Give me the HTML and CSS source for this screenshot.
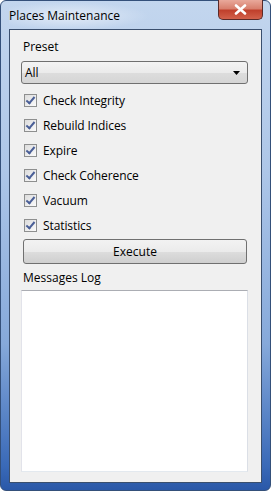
FILE: index.html
```html
<!DOCTYPE html>
<html lang="en">
<head>
  <meta charset="UTF-8">
  <title>Places Maintenance</title>
  <link rel="stylesheet" href="styles.css">
</head>
<body>
  <div class="window">
    <!-- title bar -->
    <div class="titlebar">
      <span class="title">Places Maintenance</span>
      <button class="close-button">
        <svg width="13" height="11" viewBox="0 0 13 11">
          <path d="M2 1.5 L11 9.5 M11 1.5 L2 9.5" stroke="#fff" stroke-width="2.6" stroke-linecap="round"/>
        </svg>
      </button>
    </div>

    <div class="client">
      <div class="label">Preset</div>
      <div class="select">
        <span>All</span>
        <svg class="arrow" width="7" height="4" viewBox="0 0 7 4"><path d="M0 0 H7 L3.5 4 Z" fill="#000"/></svg>
      </div>

      <div class="checks">
        <label class="check"><span class="box"></span>Check Integrity</label>
        <label class="check"><span class="box"></span>Rebuild Indices</label>
        <label class="check"><span class="box"></span>Expire</label>
        <label class="check"><span class="box"></span>Check Coherence</label>
        <label class="check"><span class="box"></span>Vacuum</label>
        <label class="check"><span class="box"></span>Statistics</label>
      </div>

      <button class="execute">Execute</button>

      <div class="label log-label">Messages Log</div>
      <div class="log"></div>
    </div>
  </div>
</body>
</html>
```

FILE: styles.css
```css
body {
  margin: 0;
  font-family: "Open Sans", "Noto Sans", sans-serif;
  font-size: 12px;
  color: #000;
  background: #fff;
}

/* outer aero frame */
.window {
  width: 271px;
  height: 491px;
  box-sizing: border-box;
  padding: 0 8px 7px 8px;
  border-radius: 6px;
  border: 1px solid #34507a;
  background: linear-gradient(to bottom, #c3d6ee 0%, #adc6e8 35%, #86a9da 70%, #3a6ab8 95%, #2a58a8 100%);
  display: flex;
  flex-direction: column;
}

.titlebar {
  height: 28px;
  display: flex;
  justify-content: space-between;
  align-items: flex-start;
  background: radial-gradient(ellipse 80px 14px at 60px 15px, rgba(255,255,255,0.55), rgba(255,255,255,0));
}

.title {
  margin-top: 6px;
  font-size: 12px;
  color: #000;
}

.close-button {
  width: 45px;
  height: 20px;
  margin-top: -1px;
  margin-right: -1px;
  border: 1px solid #5a2a28;
  border-top: none;
  border-radius: 0 0 5px 5px;
  background: linear-gradient(to bottom, #e9a99b 0%, #d8806e 45%, #c0402c 55%, #d2614b 100%);
  display: flex;
  align-items: center;
  justify-content: center;
  padding: 0;
}

.client {
  flex: 1;
  background: #f0f0f0;
  border: 1px solid #3a4f6e;
  padding: 8px 13px 0 11px;
  display: flex;
  flex-direction: column;
}

.label {
  padding-left: 2px;
  line-height: 16px;
  margin-top: 1px;
}

.select {
  margin-top: 6px;
  height: 21px;
  border: 1px solid #707070;
  border-radius: 3px;
  background: linear-gradient(to bottom, #f4f4f4 0%, #ebebeb 50%, #dddddd 51%, #d5d5d5 100%);
  display: flex;
  align-items: center;
  justify-content: space-between;
  padding: 0 7px 0 3px;
}

.checks {
  margin-top: 4px;
  display: flex;
  flex-direction: column;
}

.check {
  height: 25px;
  display: flex;
  align-items: center;
  padding-left: 3px;
  letter-spacing: -0.1px;
}

.box {
  width: 11px;
  height: 11px;
  border: 1px solid #8e8f8f;
  background: linear-gradient(to bottom right, #dcdcdc, #fbfbfb);
  margin-right: 6px;
  position: relative;
}

.box:after {
  content: "";
  position: absolute;
  left: 3px;
  top: 0px;
  width: 3px;
  height: 7px;
  border: solid #4a5f97;
  border-width: 0 2px 2px 0;
  transform: rotate(40deg);
}

.execute {
  margin: 1px 1px 0 2px;
  height: 25px;
  border: 1px solid #707070;
  border-radius: 3px;
  background: linear-gradient(to bottom, #f2f2f2 0%, #ebebeb 50%, #dddddd 51%, #cfcfcf 100%);
  font-family: inherit;
  font-size: 12px;
  color: #000;
}

.log-label {
  margin-top: 6px;
}

.log {
  margin-top: 4px;
  height: 180px;
  background: #fff;
  border: 1px solid #abadb3;
  border-color: #abadb3 #dbdfe6 #e3e9ef #e2e3ea;
}
```
